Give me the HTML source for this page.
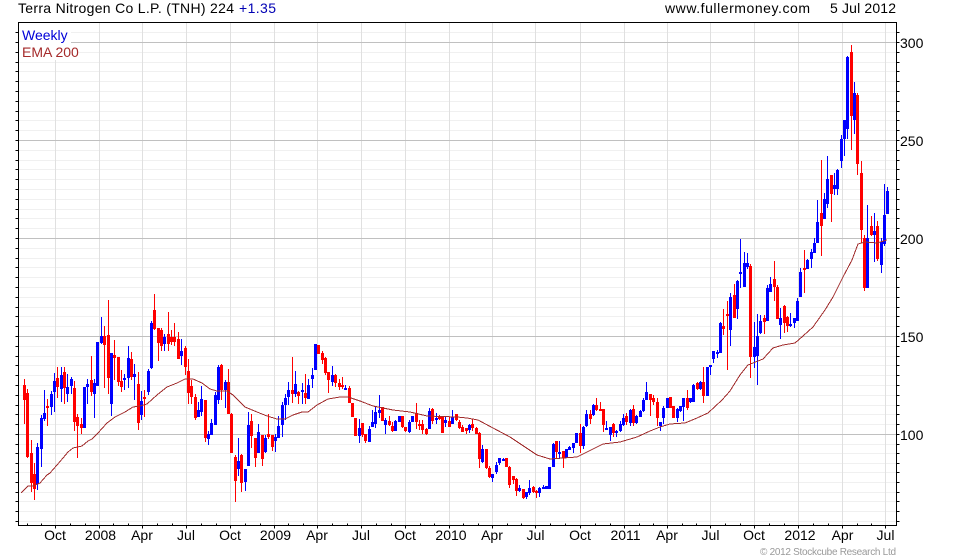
<!DOCTYPE html>
<html><head><meta charset="utf-8"><title>Terra Nitrogen Co L.P. (TNH)</title>
<style>html,body{margin:0;padding:0;background:#fff}svg{display:block}text{font-family:"Liberation Sans",Arial,sans-serif;font-size:14px;fill:#000}.c{text-anchor:middle}</style></head><body>
<svg width="980" height="560" viewBox="0 0 980 560" xmlns="http://www.w3.org/2000/svg">
<g shape-rendering="crispEdges" fill="none" stroke-width="1" transform="translate(0 .5)">
<path stroke="#f0f0f0" d="M19 32H896M19 52H896M19 62H896M19 71H896M19 81H896M19 91H896M19 101H896M19 111H896M19 120H896M19 130H896M19 150H896M19 160H896M19 169H896M19 179H896M19 189H896M19 199H896M19 209H896M19 218H896M19 228H896M19 248H896M19 258H896M19 267H896M19 277H896M19 287H896M19 297H896M19 307H896M19 316H896M19 326H896M19 346H896M19 356H896M19 365H896M19 375H896M19 385H896M19 395H896M19 405H896M19 414H896M19 424H896M19 444H896M19 453H896M19 463H896M19 472H896M19 482H896M19 492H896M19 501H896M19 511H896M19 521H896"/>
</g>
<g shape-rendering="crispEdges" fill="none" transform="translate(.5 0)">
<path stroke="#e0e0e0" d="M55 23V525M99 23V525M142 23V525M186 23V525M230 23V525M274 23V525M317 23V525M361 23V525M405 23V525M449 23V525M492 23V525M535 23V525M580 23V525M624 23V525M667 23V525M710 23V525M754 23V525M798 23V525M842 23V525M885 23V525"/>
</g>
<g shape-rendering="crispEdges" fill="none" transform="translate(0 .5)">
<path stroke="#c0c0c0" d="M19 42H896M19 140H896M19 238H896M19 336H896M19 434H896"/>
</g>
<rect x="19" y="23" width="52" height="23" fill="#fff"/>
<rect x="19" y="46" width="60" height="14" fill="#fff"/>
<g shape-rendering="crispEdges" fill="none" transform="translate(.5 0)">
<path stroke="#f00" stroke-width="1" d="M24 379V424M27 389V458M31 440V492M34 463V500M47 399V426M57 367V398M64 367V404M74 381V431M77 414V458M81 418V434M91 356V396M104 326V388M108 300V394M114 340V380M118 357V386M121 370V392M131 352V380M138 372V430M144 390V417M154 294V330M158 328V361M161 328V351M168 312V351M171 330V345M174 323V346M178 332V359M185 346V375M188 359V404M191 380V404M195 394V420M205 400V442M221 364V400M228 369V414M231 413V453M235 455V502M241 454V492M251 414V448M255 438V467M262 435V466M268 414V439M272 435V451M292 357V403M298 391V404M305 374V404M318 345V354M322 351V364M325 357V375M328 372V393M335 374V387M339 379V390M342 377V389M349 386V403M352 403V417M355 418V436M362 423V437M365 434V443M382 407V421M389 416V426M392 422V432M402 416V428M405 427V432M416 403V429M419 420V430M422 420V434M426 428V435M432 408V424M439 415V420M442 416V433M449 417V427M456 414V421M459 420V429M462 425V432M466 428V434M472 419V431M476 427V434M479 432V468M486 449V469M489 466V478M506 458V467M509 466V488M513 476V484M516 478V496M523 489V499M533 486V493M536 490V498M556 441V459M563 451V468M580 424V453M590 410V424M596 398V411M600 402V410M603 409V432M613 423V437M626 413V425M633 405V426M650 394V416M653 395V405M657 398V426M670 397V408M673 406V418M687 390V410M697 382V390M703 367V403M723 309V335M727 301V370M734 284V318M750 264V378M764 315V334M774 261V301M777 285V319M784 305V333M787 316V332M804 250V293M821 160V256M831 175V222M851 45V150M857 93V175M861 161V243M864 235V291M871 216V236M877 221V261"/>
<path stroke="#f00" stroke-width="3" d="M24 385V400M27 393V457M31 453V483M34 474V489M47 406V408M57 378V387M64 372V388M74 388V422M77 417V426M81 424V428M91 380V392M104 336V345M108 335V378M114 355V358M118 357V382M121 381V387M131 359V377M138 384V423M144 397V399M154 310V329M158 328V343M161 330V346M168 334V344M171 337V342M174 337V342M178 339V359M185 348V367M188 371V393M191 386V397M195 397V418M205 400V438M221 365V390M228 382V414M231 414V453M235 457V481M241 455V483M251 421V436M255 438V458M262 435V459M268 434V437M272 435V447M292 390V394M298 392V396M305 393V398M318 345V354M322 353V360M325 358V373M328 372V380M335 375V383M339 383V387M342 385V387M349 388V403M352 403V417M355 418V436M362 423V435M365 434V441M382 407V421M389 421V425M392 426V431M402 416V427M405 427V431M416 413V422M419 424V426M422 424V430M426 429V434M432 409V421M439 416V419M442 417V433M449 421V427M456 414V420M459 422V428M462 427V432M466 428V431M472 424V428M476 428V434M479 433V459M486 449V468M489 468V477M506 458V467M509 467V485M513 476V480M516 479V491M523 489V498M533 487V492M536 491V493M556 441V452M563 451V458M580 433V446M590 414V419M596 405V410M600 409V411M603 409V425M613 424V433M626 416V422M633 409V423M650 394V400M653 398V402M657 402V418M670 397V408M673 406V418M687 398V408M697 383V389M703 382V396M723 326V329M727 314V316M734 295V318M750 266V357M764 318V322M774 279V287M777 287V319M784 306V323M787 317V326M804 268V270M821 213V226M831 175V194M851 52V116M857 95V164M861 173V230M864 238V288M871 226V235M877 226V259"/>
<path stroke="#00f" stroke-width="1" d="M37 443V490M41 415V467M44 390V421M51 391V415M54 373V412M61 367V402M67 374V402M71 377V394M84 387V428M87 379V404M94 379V418M97 342V386M101 317V344M111 353V416M124 374V390M128 346V388M134 364V400M141 391V420M148 369V395M151 321V369M164 334V351M181 339V365M198 402V417M201 386V416M208 431V445M211 419V435M215 392V425M218 365V404M225 380V408M238 438V476M245 469V491M248 412V466M258 424V453M265 435V453M275 434V452M278 416V438M282 402V437M285 394V420M288 382V405M295 371V397M302 383V404M308 379V399M312 368V388M315 344V370M332 366V386M345 385V390M359 419V443M369 426V442M372 410V427M375 406V428M379 395V418M385 418V434M395 420V431M399 416V422M409 420V433M412 416V422M429 408V429M436 413V424M445 417V427M452 410V424M469 424V433M482 445V463M492 474V482M496 462V474M499 458V465M503 458V461M519 485V492M526 492V499M529 480V495M539 487V497M543 485V489M546 486V489M549 467V489M553 443V467M559 441V459M566 449V458M569 446V450M573 443V453M576 433V443M583 426V449M586 410V427M593 404V416M606 421V430M610 428V441M616 430V437M620 421V432M623 414V426M630 409V426M636 415V424M640 410V417M643 398V412M646 382V400M660 422V431M663 406V424M667 398V408M677 408V422M680 406V412M683 398V421M690 398V403M693 384V402M700 381V390M707 367V396M710 365V375M713 351V363M717 350V358M720 322V353M730 293V346M737 280V319M740 239V288M744 252V287M747 253V269M754 322V368M757 314V385M760 315V334M767 285V321M770 277V292M780 308V339M790 313V327M794 318V328M797 298V321M800 268V297M807 259V269M811 249V268M814 238V253M817 200V243M824 193V219M827 156V208M834 173V195M837 169V195M841 135V168M844 120V156M847 56V139M854 82V134M867 205V288M874 213V262M881 238V273M884 184V246M887 187V214"/>
<path stroke="#00f" stroke-width="3" d="M37 447V484M41 418V449M44 413V419M51 394V407M54 381V392M61 375V389M67 387V394M71 379V386M84 387V428M87 384V387M94 383V394M97 342V386M101 336V343M111 353V404M124 378V380M128 358V378M134 374V377M141 401V415M148 371V392M151 323V368M164 337V344M181 351V356M198 410V417M201 399V412M208 434V439M211 423V435M215 395V425M218 367V400M225 382V390M238 461V469M245 469V482M248 425V466M258 432V453M265 438V452M275 437V441M278 426V438M282 405V425M285 398V405M288 390V397M295 384V394M302 390V392M308 385V399M312 375V379M315 344V370M332 375V382M345 388V390M359 428V436M369 429V442M372 422V427M375 412V424M379 410V413M385 420V425M395 421V431M399 416V422M409 422V432M412 416V422M429 411V429M436 418V420M445 420V423M452 417V424M469 425V430M482 449V462M492 474V478M496 465V472M499 458V463M503 459V461M519 488V491M526 492V497M529 488V493M539 488V493M543 487V489M546 486V489M549 467V489M553 444V467M559 452V454M566 449V458M569 447V450M573 443V448M576 433V443M583 427V446M586 414V426M593 405V415M606 428V430M610 427V435M616 431V433M620 424V431M623 418V425M630 410V423M636 416V423M640 411V417M643 400V411M646 392V400M660 422V426M663 408V418M667 398V408M677 409V418M680 406V411M683 398V407M690 398V402M693 385V402M700 382V389M707 367V396M710 365V367M713 351V359M717 352V354M720 323V353M730 297V330M737 281V309M740 272V274M744 263V287M747 263V267M754 347V357M757 336V356M760 321V333M767 288V321M770 284V292M780 318V325M790 324V326M794 318V323M797 301V321M800 272V297M807 260V269M811 252V259M814 243V253M817 222V243M824 199V219M827 179V204M834 185V189M837 170V189M841 139V161M844 120V139M847 57V129M854 93V120M867 238V288M874 231V235M881 242V265M884 215V244M887 191V214"/>
</g>
<path fill="none" stroke="#a02c2c" stroke-width="1" shape-rendering="crispEdges" d="M21 493L25 489L28 486L33 486L40 483L47 475L50 473L57 465L63 458L68 452L73 448L82 446L88 441L92 439L98 433L107 423L115 417L125 412L133 407L140 406L147 404L157 395L167 387L177 383L185 379L193 379L202 383L210 389L217 391L227 391L233 395L245 407L257 412L267 416L277 419L285 419L293 415L302 412L308 412L317 405L328 399L340 397L348 397L360 401L373 406L393 410L410 412L427 416L457 417L467 418L478 420L493 428L510 437L522 445L537 455L550 459L563 458L577 457L593 449L603 444L620 442L637 437L650 431L660 427L670 424L685 423L697 418L708 413L722 400L730 391L740 375L748 365L763 359L773 348L783 345L795 343L803 336L813 327L825 310L833 297L843 277L852 260L858 244L865 242L877 243L887 240"/>
<g shape-rendering="crispEdges" fill="none" stroke="#000" transform="translate(.5 .5)">
<path d="M18 22H896V525H18Z"/>
<path d="M15 32H18M15 42H18M15 52H18M15 62H18M15 71H18M15 81H18M15 91H18M15 101H18M15 111H18M15 120H18M15 130H18M15 140H18M15 150H18M15 160H18M15 169H18M15 179H18M15 189H18M15 199H18M15 209H18M15 218H18M15 228H18M15 238H18M15 248H18M15 258H18M15 267H18M15 277H18M15 287H18M15 297H18M15 307H18M15 316H18M15 326H18M15 336H18M15 346H18M15 356H18M15 365H18M15 375H18M15 385H18M15 395H18M15 405H18M15 414H18M15 424H18M15 434H18M15 444H18M15 453H18M15 463H18M15 472H18M15 482H18M15 492H18M15 501H18M15 511H18M15 521H18"/>
<path d="M896 32H899M896 42H899M896 52H899M896 62H899M896 71H899M896 81H899M896 91H899M896 101H899M896 111H899M896 120H899M896 130H899M896 140H899M896 150H899M896 160H899M896 169H899M896 179H899M896 189H899M896 199H899M896 209H899M896 218H899M896 228H899M896 238H899M896 248H899M896 258H899M896 267H899M896 277H899M896 287H899M896 297H899M896 307H899M896 316H899M896 326H899M896 336H899M896 346H899M896 356H899M896 365H899M896 375H899M896 385H899M896 395H899M896 405H899M896 414H899M896 424H899M896 434H899M896 444H899M896 453H899M896 463H899M896 472H899M896 482H899M896 492H899M896 501H899M896 511H899M896 521H899"/>
<path d="M27 525V523M41 525V523M70 525V523M85 525V523M113 525V523M128 525V523M157 525V523M172 525V523M201 525V523M216 525V523M245 525V523M260 525V523M288 525V523M303 525V523M332 525V523M347 525V523M376 525V523M391 525V523M420 525V523M434 525V523M463 525V523M478 525V523M507 525V523M521 525V523M550 525V523M565 525V523M595 525V523M610 525V523M639 525V523M653 525V523M682 525V523M696 525V523M725 525V523M740 525V523M769 525V523M784 525V523M813 525V523M828 525V523M857 525V523M871 525V523"/>
<path d="M55 525V528M99 525V528M142 525V528M186 525V528M230 525V528M274 525V528M317 525V528M361 525V528M405 525V528M449 525V528M492 525V528M535 525V528M580 525V528M624 525V528M667 525V528M710 525V528M754 525V528M798 525V528M842 525V528M885 525V528"/>
</g>
<text x="18" y="13" textLength="216" lengthAdjust="spacing">Terra Nitrogen Co L.P. (TNH) 224</text>
<text x="239" y="13" textLength="37" lengthAdjust="spacing" style="fill:#0000b4">+1.35</text>
<text x="665" y="13" textLength="145" lengthAdjust="spacing">www.fullermoney.com</text>
<text x="830" y="13" textLength="66" lengthAdjust="spacing">5 Jul 2012</text>
<text x="22" y="40" style="fill:#0000d8">Weekly</text>
<text x="22" y="57" style="fill:#a52a2a">EMA 200</text>
<text x="900" y="48">300</text><text x="900" y="146">250</text><text x="900" y="244">200</text><text x="900" y="342">150</text><text x="900" y="440">100</text>
<g class="c">
<text class="c" x="55" y="540">Oct</text><text class="c" x="100.5" y="540">2008</text><text class="c" x="142" y="540">Apr</text><text class="c" x="186" y="540">Jul</text><text class="c" x="230" y="540">Oct</text><text class="c" x="275.5" y="540">2009</text><text class="c" x="317" y="540">Apr</text><text class="c" x="361" y="540">Jul</text><text class="c" x="405" y="540">Oct</text><text class="c" x="451" y="540">2010</text><text class="c" x="492" y="540">Apr</text><text class="c" x="535.5" y="540">Jul</text><text class="c" x="580" y="540">Oct</text><text class="c" x="625.5" y="540">2011</text><text class="c" x="667" y="540">Apr</text><text class="c" x="710.5" y="540">Jul</text><text class="c" x="754" y="540">Oct</text><text class="c" x="800" y="540">2012</text><text class="c" x="842.5" y="540">Apr</text><text class="c" x="885.5" y="540">Jul</text>
</g>
<text x="760" y="555" textLength="136" lengthAdjust="spacing" style="font-size:10px;fill:#999">© 2012 Stockcube Research Ltd</text>
</svg>
</body></html>
